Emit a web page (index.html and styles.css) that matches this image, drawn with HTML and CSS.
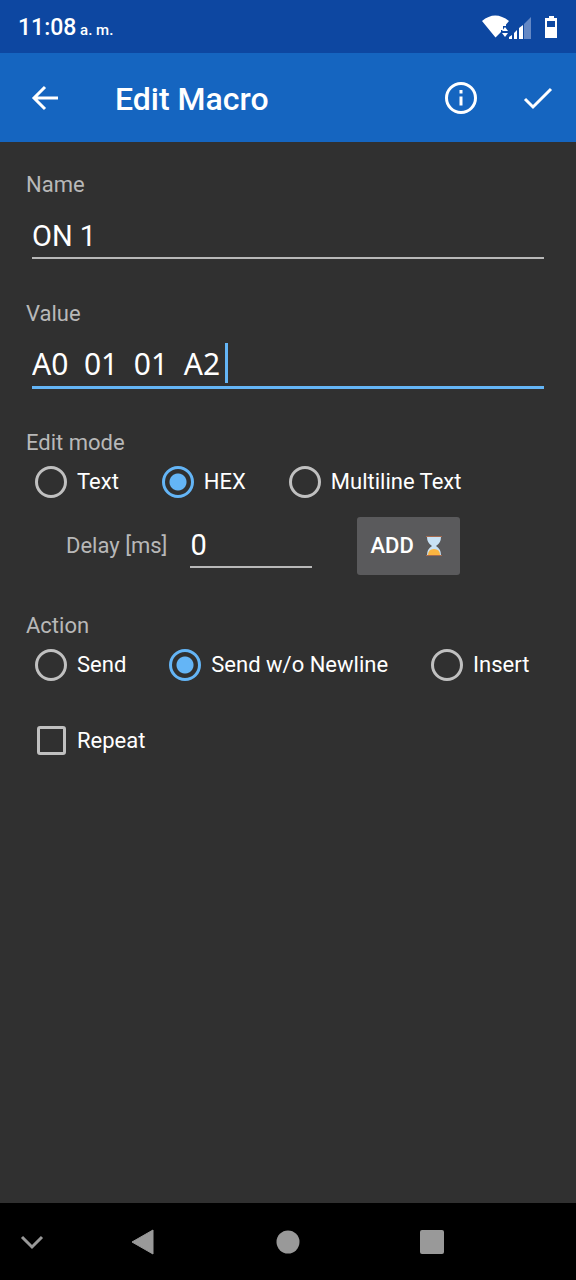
FILE: index.html
```
<!DOCTYPE html>
<html lang="en">
<head>
<meta charset="utf-8">
<meta name="viewport" content="width=device-width, initial-scale=1">
<title>Edit Macro</title>
<link rel="stylesheet" href="styles.css">
</head>
<body>
<header class="status">
  <div class="clock">11:08<span class="clock-half"> a. m.</span></div>
  <svg class="status-icons" viewBox="0 0 78 26" aria-hidden="true">
    <path d="M1 7Q14-4 28 7L25 10.500V12H22V16H20V18L14.500 23.500Z" fill="#fff"/>
    <path d="M21 17l3-4 3 4zM21 19h6l-3 4z" fill="#fff"/>
    <path d="M28 25v-2l3-2v4zM33 25v-6l3-3v9zM38 25V14l4-3v14z" fill="#fff"/>
    <path d="M43 25V10l7-7v22z" fill="#6488c5"/>
    <path d="M67 4h1V2h5v2h3v20H64V4zM66 7v6h8V7z" fill="#fff" fill-rule="evenodd"/>
  </svg>
</header>
<nav class="toolbar">
  <button class="icon-button" aria-label="Back"><svg viewBox="0 0 32 32"><path d="M29 16H5M16 5L5 16l11 11" /></svg></button>
  <h1 class="title">Edit Macro</h1>
  <button class="icon-button" aria-label="Info"><svg class="info" viewBox="0 0 34 34"><circle cx="17" cy="17" r="14.500"/><path d="M17 15.500v9M17 9v3.500"/></svg></button>
  <button class="icon-button" aria-label="Save"><svg viewBox="0 0 32 32"><path d="M3 17l8 8L29 7"/></svg></button>
</nav>
<main class="form">
  <div class="field">
    <label class="label" for="name">Name</label>
    <input class="input" id="name" type="text" value="ON 1">
  </div>
  <div class="field">
    <label class="label" for="value">Value</label>
    <input class="input input-code" id="value" type="text" value="A0  01  01  A2">
    <span class="caret"></span>
  </div>
  <fieldset class="group">
    <legend class="label">Edit mode</legend>
    <div class="choices">
      <label class="choice"><input class="radio" type="radio" name="mode">Text</label>
      <label class="choice"><input class="radio" type="radio" name="mode" checked>HEX</label>
      <label class="choice"><input class="radio" type="radio" name="mode">Multiline Text</label>
    </div>
  </fieldset>
  <div class="delay">
    <label class="label" for="delay">Delay [ms]</label>
    <input class="input input-delay" id="delay" type="text" value="0">
    <button class="add">ADD
      <svg class="hourglass" viewBox="0 0 18 22" aria-hidden="true">
        <path d="M2 2h14q0 6-5 9 5 3 5 9H2q0-6 5-9-5-3-5-9z" fill="#c9e2f5"/>
        <path d="M3 20q0-6 6-6t6 6z" fill="#fbb540"/>
        <path d="M1 1h16v1H1zM1 20h16v1H1z" fill="#a66a4e"/>
      </svg>
    </button>
  </div>
  <fieldset class="group">
    <legend class="label">Action</legend>
    <div class="choices">
      <label class="choice"><input class="radio" type="radio" name="action">Send</label>
      <label class="choice"><input class="radio" type="radio" name="action" checked>Send w/o Newline</label>
      <label class="choice"><input class="radio" type="radio" name="action">Insert</label>
    </div>
  </fieldset>
  <label class="choice repeat"><input class="checkbox" type="checkbox">Repeat</label>
</main>
<footer class="system-nav">
  <button class="nav-button nav-small" aria-label="Hide keyboard"><svg viewBox="0 0 26 26"><path d="M3 8l10 10L23 8" fill="none" stroke="#999" stroke-width="3"/></svg></button>
  <button class="nav-button" aria-label="Back"><svg viewBox="0 0 26 26"><path d="M1 13L22 1v24z" fill="#999" stroke="#999" stroke-linejoin="round"/></svg></button>
  <button class="nav-button" aria-label="Home"><svg viewBox="0 0 26 26"><circle cx="13" cy="13" r="11.500" fill="#999"/></svg></button>
  <button class="nav-button" aria-label="Recent apps"><svg viewBox="0 0 26 26"><rect x="1" y="1" width="24" height="24" rx="2" fill="#999"/></svg></button>
</footer>
</body>
</html>
```
FILE: styles.css
```
* { box-sizing: border-box; }

body {
  margin: 0;
  min-height: 100vh;
  display: flex;
  flex-direction: column;
  background: #303030;
  color: #fff;
  font: 22px/26px Roboto, sans-serif;
}

button {
  border: 0;
  padding: 0;
  background: none;
  color: inherit;
  font: inherit;
}

svg { display: block; }

.status {
  display: flex;
  align-items: center;
  justify-content: space-between;
  height: 53px;
  padding: 0 17px 0 18px;
  background: #0d47a1;
}

.clock { font-size: 23px; font-weight: 500; padding-top: 4px; }
.clock-half { font-size: 15px; }
.status-icons { width: 78px; height: 26px; }

.toolbar {
  display: flex;
  align-items: center;
  height: 89px;
  padding: 0 14px 0 21px;
  gap: 29px;
  background: #1565c0;
}

.title {
  flex: 1;
  margin: 0;
  padding: 2px 0 0 17px;
  font-size: 32px;
  line-height: 40px;
  font-weight: 500;
}

.icon-button {
  display: grid;
  place-items: center;
  width: 48px;
  height: 48px;
}

.icon-button svg {
  width: 32px;
  height: 32px;
  fill: none;
  stroke: #fff;
  stroke-width: 3;
}

.icon-button .info { width: 34px; height: 34px; }

.form {
  flex: 1;
  padding: 30px 26px;
}

.field {
  position: relative;
  display: flex;
  flex-direction: column;
  height: 129px;
}

.label { color: #b8b8b8; padding: 0; }

.input {
  width: auto;
  min-width: 0;
  height: 44px;
  margin: 17px 6px 0;
  padding: 0;
  border: 0;
  border-bottom: 2px solid #b8b8b8;
  border-radius: 0;
  outline: 0;
  background: none;
  color: #fff;
  font: 29px/40px Roboto, sans-serif;
}

.input-code {
  height: 46px;
  margin-top: 16px;
  padding-bottom: 2px;
  border-bottom: 3px solid #64b5f6;
  font: 30px/40px "Noto Sans", sans-serif;
}

.caret {
  position: absolute;
  left: 199px;
  top: 42px;
  width: 3px;
  height: 40px;
  background: #64b5f6;
}

.group { margin: 0; padding: 0; border: 0; min-width: 0; }

.choices {
  display: flex;
  gap: 43px;
  padding: 10px 0 0 9px;
}

.choice {
  display: flex;
  align-items: center;
  gap: 10px;
  white-space: nowrap;
}

.radio {
  appearance: none;
  width: 32px;
  height: 32px;
  margin: 0;
  border: 3px solid #c0c0c0;
  border-radius: 50%;
}

.radio:checked {
  border-color: #64b5f6;
  background: radial-gradient(circle, #64b5f6 8px, transparent 9px);
}

.checkbox {
  appearance: none;
  width: 29px;
  height: 29px;
  margin: 0 1px 0 2px;
  border: 3px solid #c0c0c0;
  border-radius: 3px;
}

.delay {
  display: flex;
  align-items: center;
  height: 58px;
  margin: 19px 0 38px 40px;
}

.input-delay {
  width: 122px;
  margin: 0 45px 0 23px;
}

.add {
  display: flex;
  align-items: center;
  gap: 11px;
  width: 103px;
  height: 58px;
  padding-left: 13px;
  border-radius: 3px;
  background: #5a5a5c;
  font-weight: 500;
}

.hourglass { width: 18px; height: 22px; }

.repeat { margin: 45px 0 0 9px; }

.system-nav {
  display: grid;
  grid-template-columns: 1fr 2fr 2fr 2fr 1fr;
  align-items: center;
  height: 77px;
  background: #000;
}

.nav-button { display: grid; place-items: center; }
.nav-small { padding-right: 8px; }
.nav-button svg { width: 26px; height: 26px; }
```
